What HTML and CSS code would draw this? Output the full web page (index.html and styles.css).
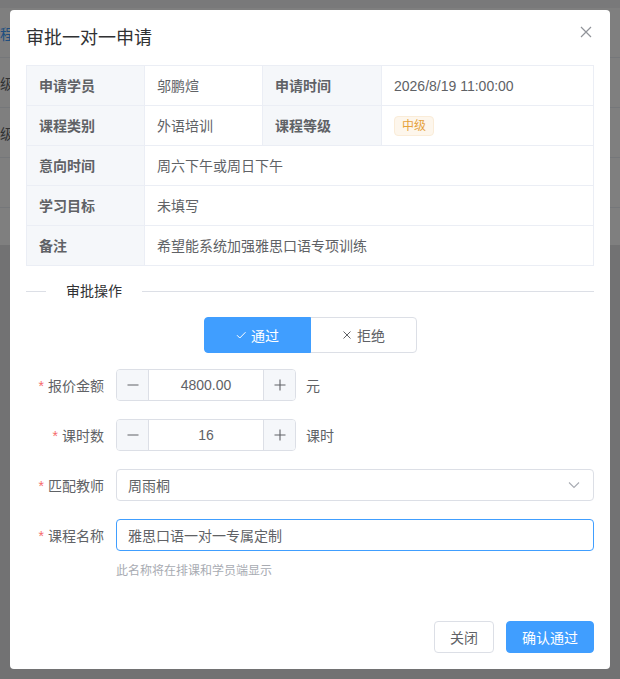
FILE: index.html
```html
<!DOCTYPE html>
<html lang="zh-CN">
<head>
  <meta charset="UTF-8" />
  <meta name="viewport" content="width=device-width, initial-scale=1.0"/>
  <title>审批一对一申请</title>
  <link rel="stylesheet" href="styles.css">
</head>
<body>

<!-- page behind the dialog -->
<div class="page">
  <div class="list-card">
    <div class="list-row"><span class="list-link">程</span></div>
    <div class="list-row"><span class="list-text">级</span></div>
    <div class="list-row"><span class="list-text">级</span></div>
    <div class="list-row"></div>
  </div>
</div>

<div class="overlay">
  <div class="dialog">
    <div class="dialog-header">
      <span class="dialog-title">审批一对一申请</span>
      <button class="dialog-close" aria-label="关闭">
        <svg width="12" height="12" viewBox="0 0 12 12"><path d="M1 1 L11 11 M11 1 L1 11" stroke="#909399" stroke-width="1.2" fill="none"/></svg>
      </button>
    </div>

    <table class="desc">
      <colgroup><col class="c-label"><col class="c-value"><col class="c-label2"><col></colgroup>
      <tr>
        <td class="desc-label">申请学员</td><td>邬鹏煊</td>
        <td class="desc-label">申请时间</td><td>2026/8/19 11:00:00</td>
      </tr>
      <tr>
        <td class="desc-label">课程类别</td><td>外语培训</td>
        <td class="desc-label">课程等级</td><td><span class="tag-warning">中级</span></td>
      </tr>
      <tr><td class="desc-label">意向时间</td><td colspan="3">周六下午或周日下午</td></tr>
      <tr><td class="desc-label">学习目标</td><td colspan="3">未填写</td></tr>
      <tr><td class="desc-label">备注</td><td colspan="3">希望能系统加强雅思口语专项训练</td></tr>
    </table>

    <div class="divider">
      <span class="divider-line short"></span>
      <span class="divider-text">审批操作</span>
      <span class="divider-line"></span>
    </div>

    <div class="seg-wrap">
      <div class="seg">
        <button class="seg-btn active">
          <svg width="12" height="12" viewBox="0 0 12 12"><path d="M2 6.2 L4.8 9 L10.5 3.2" stroke="#fff" stroke-width="1" fill="none"/></svg>
          通过
        </button>
        <button class="seg-btn">
          <svg width="12" height="12" viewBox="0 0 12 12"><path d="M2.5 2.5 L9.5 9.5 M9.5 2.5 L2.5 9.5" stroke="#606266" stroke-width="1" fill="none"/></svg>
          拒绝
        </button>
      </div>
    </div>

    <div class="form">
      <div class="form-item">
        <label class="form-label"><i>*</i>报价金额</label>
        <div class="num">
          <span class="num-btn minus"><svg width="14" height="14" viewBox="0 0 14 14"><path d="M1.5 7 H12.5" stroke="#606266" stroke-width="1.1"/></svg></span>
          <span class="num-value">4800.00</span>
          <span class="num-btn plus"><svg width="14" height="14" viewBox="0 0 14 14"><path d="M1.5 7 H12.5 M7 1.5 V12.5" stroke="#606266" stroke-width="1.1"/></svg></span>
        </div>
        <span class="unit">元</span>
      </div>

      <div class="form-item">
        <label class="form-label"><i>*</i>课时数</label>
        <div class="num">
          <span class="num-btn minus"><svg width="14" height="14" viewBox="0 0 14 14"><path d="M1.5 7 H12.5" stroke="#606266" stroke-width="1.1"/></svg></span>
          <span class="num-value">16</span>
          <span class="num-btn plus"><svg width="14" height="14" viewBox="0 0 14 14"><path d="M1.5 7 H12.5 M7 1.5 V12.5" stroke="#606266" stroke-width="1.1"/></svg></span>
        </div>
        <span class="unit">课时</span>
      </div>

      <div class="form-item">
        <label class="form-label"><i>*</i>匹配教师</label>
        <div class="select">
          <span>周雨桐</span>
          <svg width="14" height="14" viewBox="0 0 14 14"><path d="M2 4.5 L7 9.5 L12 4.5" stroke="#a8abb2" stroke-width="1.1" fill="none"/></svg>
        </div>
      </div>

      <div class="form-item last">
        <label class="form-label"><i>*</i>课程名称</label>
        <div class="input focus">雅思口语一对一专属定制</div>
      </div>
      <div class="form-tip">此名称将在排课和学员端显示</div>
    </div>

    <div class="dialog-footer">
      <button class="btn">关闭</button>
      <button class="btn btn-primary">确认通过</button>
    </div>
  </div>
</div>

</body>
</html>
```

FILE: styles.css
```css
* { box-sizing: border-box; }
body {
  margin: 0;
  font-family: "Liberation Sans", "Noto Sans CJK SC", sans-serif;
  font-size: 14px;
  color: #606266;
  background: #e4e5e7;
}
button { font-family: inherit; }

/* page behind */
.page { padding-top: 8px; background: #f2f3f5; }
.list-card { background: #fff; height: 237px; }
.list-row {
  height: 50px;
  border-bottom: 1px solid #ebeef5;
  display: flex;
  align-items: center;
}
.list-link { color: #409eff; }
.list-text { color: #606266; }

/* overlay + dialog */
.overlay {
  position: fixed;
  top: 0; left: 0; right: 0; bottom: 0;
  background: rgba(0, 0, 0, 0.5);
  padding: 10px;
}
.dialog {
  position: relative;
  width: 600px;
  background: #fff;
  border-radius: 4px;
  padding: 16px;
}
.dialog-header { margin-bottom: 15px; }
.dialog-title { font-size: 18px; line-height: 24px; color: #303133; }
.dialog-close {
  position: absolute;
  top: 16px; right: 18px;
  width: 12px; height: 12px;
  padding: 0;
  border: 0;
  background: none;
  display: flex;
}

/* descriptions */
.desc {
  width: 100%;
  border-collapse: collapse;
  table-layout: fixed;
}
.c-label { width: 118px; }
.c-value { width: 118px; }
.c-label2 { width: 119px; }
.desc td {
  height: 40px;
  padding: 0 12px;
  border: 1px solid #ebeef5;
  color: #606266;
  line-height: 20px;
}
.desc td.desc-label { background: #f5f7fa; font-weight: bold; }
.tag-warning {
  display: inline-block;
  height: 20px;
  padding: 0 7px;
  font-size: 12px;
  line-height: 18px;
  color: #e6a23c;
  background: #fdf6ec;
  border: 1px solid #faecd8;
  border-radius: 4px;
  vertical-align: middle;
}

/* divider */
.divider {
  display: flex;
  align-items: center;
  height: 20px;
  margin: 15px 0 16px;
}
.divider-line { flex: 1; height: 1px; background: #dcdfe6; }
.divider-line.short { flex: 0 0 20px; }
.divider-text { padding: 0 20px; color: #303133; line-height: 20px; }

/* segmented radio */
.seg-wrap { display: flex; justify-content: center; }
.seg { display: flex; }
.seg-btn {
  width: 107px;
  height: 36px;
  display: flex;
  align-items: center;
  justify-content: center;
  gap: 4px;
  font-size: 14px;
  color: #606266;
  background: #fff;
  border: 1px solid #dcdfe6;
  padding: 0;
}
.seg-btn:first-child { border-radius: 4px 0 0 4px; }
.seg-btn:last-child { border-radius: 0 4px 4px 0; margin-left: -1px; }
.seg-btn.active { background: #409eff; border-color: #409eff; color: #fff; position: relative; }

/* form */
.form { margin-top: 16px; }
.form-item {
  display: flex;
  align-items: center;
  height: 32px;
  margin-bottom: 18px;
}
.form-item.last { margin-bottom: 0; }
.form-label {
  width: 90px;
  flex: none;
  padding-right: 12px;
  text-align: right;
  color: #606266;
}
.form-label i { font-style: normal; color: #f56c6c; margin-right: 4px; }

.num {
  width: 180px;
  height: 32px;
  display: flex;
  border: 1px solid #dcdfe6;
  border-radius: 4px;
  overflow: hidden;
}
.num-btn {
  width: 32px;
  display: flex;
  align-items: center;
  justify-content: center;
  background: #f5f7fa;
}
.num-btn.minus { border-right: 1px solid #dcdfe6; }
.num-btn.plus { border-left: 1px solid #dcdfe6; }
.num-value {
  flex: 1;
  display: flex;
  align-items: center;
  justify-content: center;
  color: #606266;
}
.unit { margin-left: 10px; color: #606266; }

.select, .input {
  flex: 1;
  height: 32px;
  display: flex;
  align-items: center;
  justify-content: space-between;
  padding: 0 12px 0 11px;
  border: 1px solid #dcdfe6;
  border-radius: 4px;
  color: #606266;
}
.input.focus { border-color: #409eff; }
.form-tip {
  margin: 10px 0 0 90px;
  font-size: 12px;
  line-height: 20px;
  color: #a8abb2;
}

/* footer */
.dialog-footer {
  display: flex;
  justify-content: flex-end;
  gap: 12px;
  margin-top: 40px;
}
.btn {
  height: 32px;
  padding: 0 15px;
  font-size: 14px;
  color: #606266;
  background: #fff;
  border: 1px solid #dcdfe6;
  border-radius: 4px;
}
.btn-primary { background: #409eff; border-color: #409eff; color: #fff; }
```
